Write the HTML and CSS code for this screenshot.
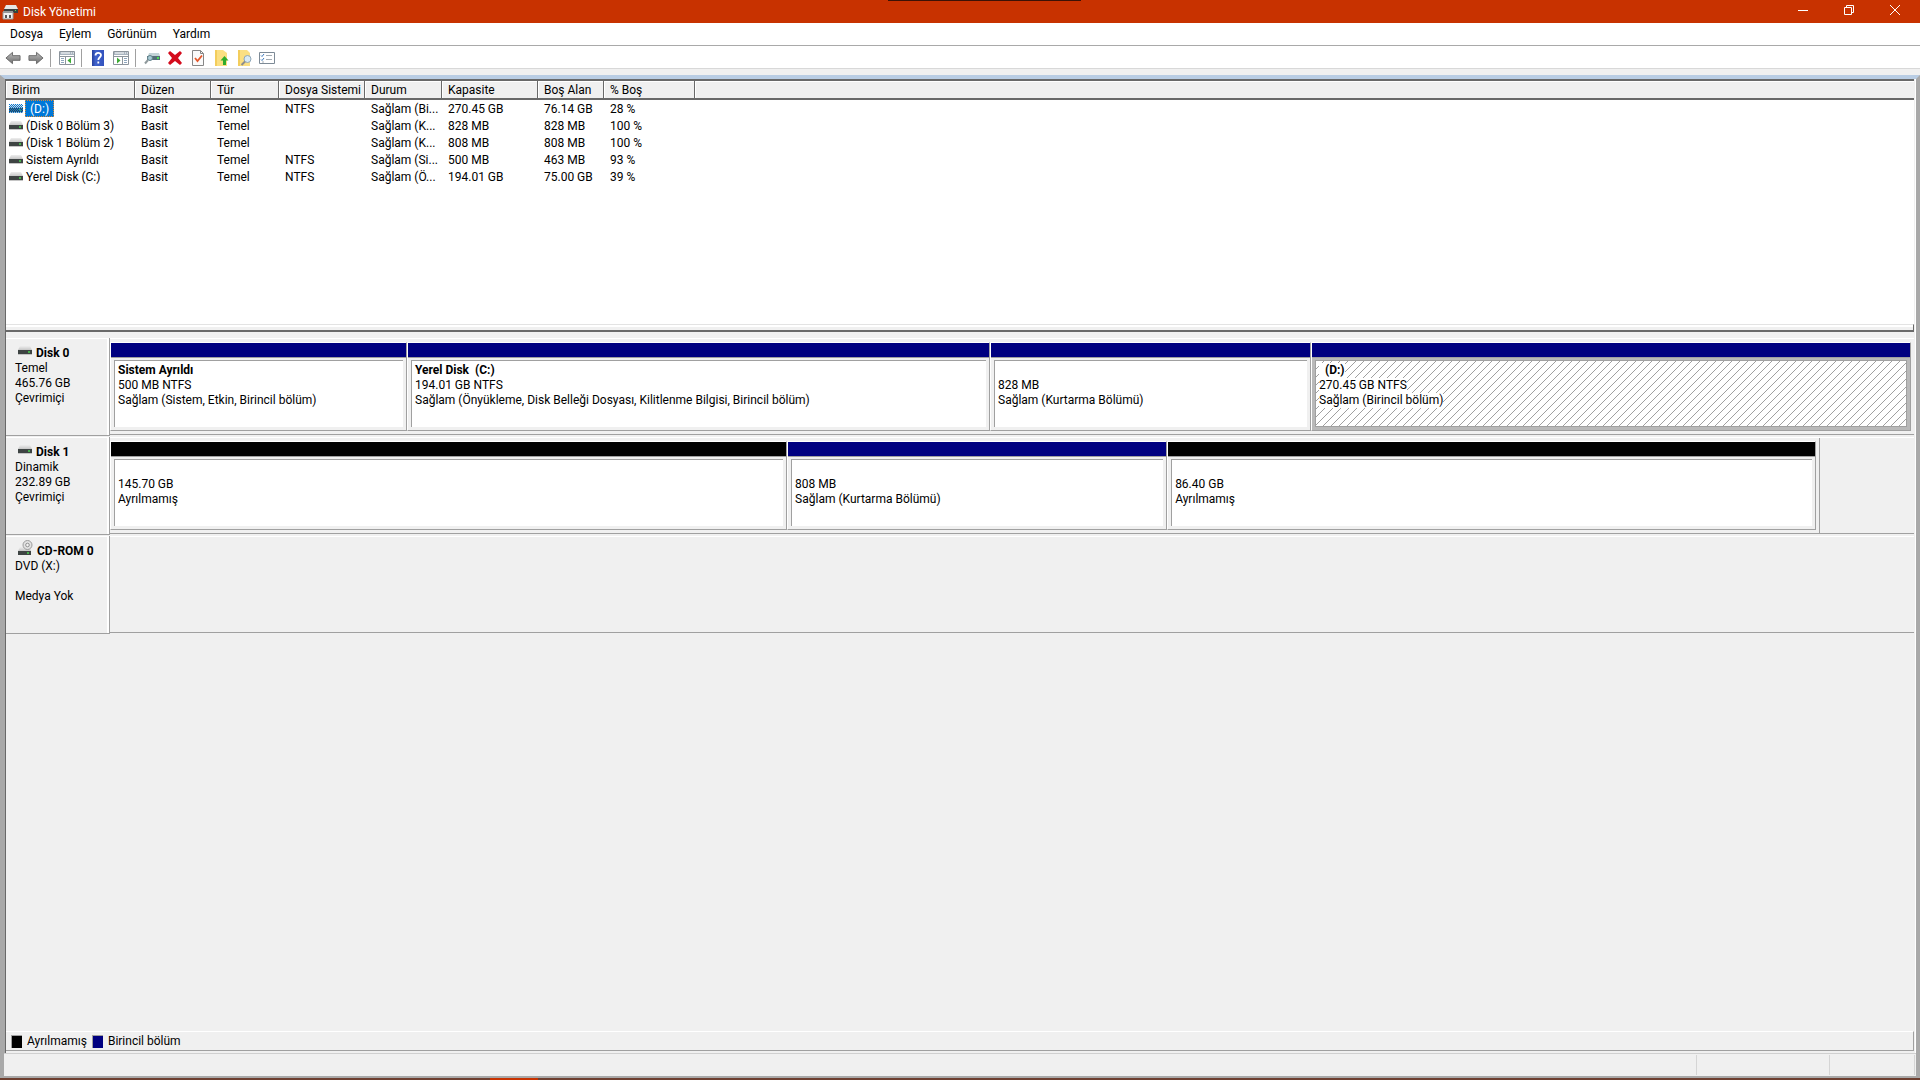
FILE: index.html
```html
<!DOCTYPE html>
<html lang="tr">
<head>
<meta charset="utf-8">
<title>Disk Yönetimi</title>
<link rel="stylesheet" href="styles.css">
</head>
<body>
<svg class="defs" aria-hidden="true">
  <defs>
    <linearGradient id="lid" x1="0" y1="0" x2="0" y2="1"><stop offset="0" stop-color="#eeeeee"/><stop offset="1" stop-color="#c6c6c6"/></linearGradient>
    <linearGradient id="arrow" x1="0" y1="0" x2="0" y2="1"><stop offset="0" stop-color="#bdbdbd"/><stop offset="1" stop-color="#6f6f6f"/></linearGradient>
    <linearGradient id="book" x1="0" y1="0" x2="1" y2="0"><stop offset="0" stop-color="#27409c"/><stop offset=".3" stop-color="#3f62cc"/><stop offset="1" stop-color="#3252bd"/></linearGradient>
    <pattern id="dots" width="2" height="2" patternUnits="userSpaceOnUse"><path d="M0 0h1v1H0zM1 1h1v1H1z" fill="#0078d7"/></pattern>
    <symbol id="drive" viewBox="0 0 14 9"><path d="M2 0h10l2 4H0z" fill="url(#lid)"/><path d="M0 4h14v4H0z" fill="#3e4443"/><path d="M0 8h14v1H0z" fill="#c5c5c5"/><path d="M10 5h2v2h-2z" fill="#46b04c"/></symbol>
    <symbol id="cdrom" viewBox="0 0 15 16"><path d="M2 7h10l1 4H0z" fill="url(#lid)"/><circle cx="9.500" cy="5" r="4.500" fill="#e2e2e2" stroke="#9c9c9c"/><circle cx="9.500" cy="5" r="1.800" fill="#f4f4f4" stroke="#909090"/><path d="M0 11h13v4H0z" fill="#3e4443"/><path d="M9 12h2v2H9z" fill="#46b04c"/></symbol>
    <symbol id="left" viewBox="0 0 17 14"><path d="M1 7l7-6v3.500h8v5H8V13z" fill="url(#arrow)" stroke="#6a6a6a"/></symbol>
    <symbol id="panel" viewBox="0 0 16 15"><path d="M.5.5h15v13H.5z" fill="#fff" stroke="#8c949c"/><path d="M1 1h14v3H1z" fill="#a9b4bf"/><path d="M2 2h9M12 2h1M14 2h1" stroke="#fff"/><path d="M1 5.500h14" stroke="#8c949c"/></symbol>
  </defs>
</svg>
<div class="window">
  <header class="titlebar">
    <svg class="app-icon" viewBox="0 0 16 16"><path d="M4 1h10l2 4H2z" fill="#e6e6e6"/><path d="M2 5h14v4H2z" fill="#3b4040"/><path d="M13 6h1v1h-1z" fill="#4be052"/><path d="M1 8h10v7H1z" fill="#f0f0f0" stroke="#9a9a9a"/><path d="M1 7h10v2H1z" fill="#999"/><path d="M3 11h2v3H3zM7 11h2v3H7z" fill="#555"/></svg>
    <h1 class="title">Disk Yönetimi</h1>
    <div class="window-buttons">
      <button class="winbtn" aria-label="Simge durumuna küçült"><svg viewBox="0 0 12 12"><path d="M1 6.500h10" class="glyph"/></svg></button>
      <button class="winbtn" aria-label="Aşağı geri getir"><svg viewBox="0 0 12 12"><path d="M1.500 3.500h7v7h-7zM3.500 3.500v-2h7v7h-2" class="glyph"/></svg></button>
      <button class="winbtn" aria-label="Kapat"><svg viewBox="0 0 12 12"><path d="M1 1l10 10M11 1L1 11" class="glyph"/></svg></button>
    </div>
    <div class="top-edge"></div>
  </header>
  <nav class="menubar">
    <button>Dosya</button><button>Eylem</button><button>Görünüm</button><button>Yardım</button>
  </nav>
  <div class="toolbar">
    <button aria-label="Geri"><svg viewBox="0 0 17 16"><use href="#left" width="17" height="16"/></svg></button>
    <button aria-label="İleri"><svg viewBox="0 0 17 16"><use href="#left" width="17" height="16" transform="matrix(-1 0 0 1 17 0)"/></svg></button>
    <span class="sep"></span>
    <button aria-label="Konsol ağacı"><svg viewBox="0 0 16 16"><g transform="translate(0 1)"><use href="#panel" width="16" height="15"/><path d="M6.500 5v9" stroke="#8c949c"/><path d="M2 7.500h3M2 9.500h3M2 11.500h3" stroke="#8fa6bd"/><path d="M12 6.500v6L8.500 9.500z" fill="#3dab35"/></g></svg></button>
    <span class="sep"></span>
    <button aria-label="Yardım"><svg viewBox="0 0 16 16"><path d="M2 0h12v16H2z" fill="url(#book)"/><path d="M5.500 5.500c0-3.500 5.500-3.300 5.500-.4 0 2.200-2.700 2.200-2.700 5M8.300 11.500v2" fill="none" stroke="#fff" stroke-width="1.800"/></svg></button>
    <button aria-label="Eylem bölmesi"><svg viewBox="0 0 16 16"><g transform="translate(0 1)"><use href="#panel" width="16" height="15"/><path d="M9.500 5v9" stroke="#8c949c"/><path d="M11 7.500h3M11 9.500h3M11 11.500h3" stroke="#8fa6bd"/><path d="M4 6.500v6l3.500-3z" fill="#3dab35"/></g></svg></button>
    <span class="sep"></span>
    <button aria-label="Yenile"><svg viewBox="0 0 16 16"><path d="M5 3h10l1 3H4z" fill="#c4d4d8"/><path d="M3 6h13v4H3z" fill="#557078"/><path d="M13 7h2v2h-2z" fill="#4be052"/><circle cx="6" cy="8" r="2.500" fill="#a9cbd5" stroke="#63828c"/><path d="M4 10l-3 3.500" stroke="#8f999c" stroke-width="2"/></svg></button>
    <button aria-label="Sil"><svg viewBox="0 0 16 16"><path d="M1 3l2-2 5 4 5-4 2 2-4 5 4 5-2 2-5-4-5 4-2-2 4-5z" fill="#d40b1c"/></svg></button>
    <button aria-label="Özellikler"><svg viewBox="0 0 16 16"><path d="M2.500.5h8l3 3v12h-11z" fill="#fafafa" stroke="#868686"/><path d="M10.500.5v3h3" fill="none" stroke="#868686"/><path d="M5 8l2.500 3L12 5.500" fill="none" stroke="#e4572b" stroke-width="1.800"/></svg></button>
    <button aria-label="Yukarı"><svg viewBox="0 0 16 16"><path d="M2 0h8l4 3v13H2z" fill="#fbdf82"/><path d="M2 0h2v16H2z" fill="#f3cd5c"/><path d="M11.500 6l4 4.500H13V15h-3v-4.500H7.500z" fill="#2fac2b"/></svg></button>
    <button aria-label="Bul"><svg viewBox="0 0 16 16"><path d="M2 0h9l3 3v13H2z" fill="#fbdf82"/><path d="M2 0h2v16H2z" fill="#f3cd5c"/><circle cx="11.500" cy="9" r="3.500" fill="#d9eaf5" stroke="#8fa7b8"/><path d="M9 11.500L5.500 15" stroke="#8d8d8d" stroke-width="2"/></svg></button>
    <button aria-label="Görünüm ayarları"><svg viewBox="0 0 16 16"><path d="M.5 2.500h15v11H.5z" fill="#fff" stroke="#7d8a96"/><path d="M2 5.500l1 1 2-2.500M2 9.500l1 1L5 8" fill="none" stroke="#3c78bd"/><path d="M7 5.500h6M7 9.500h6M3 12h2" stroke="#a4acb3"/></svg></button>
  </div>
  <main class="workspace">
    <section class="volumes">
      <table>
        <colgroup><col class="c-name"><col class="c-layout"><col class="c-type"><col class="c-fs"><col class="c-status"><col class="c-cap"><col class="c-free"><col class="c-pct"><col></colgroup>
        <thead><tr><th>Birim</th><th>Düzen</th><th>Tür</th><th>Dosya Sistemi</th><th>Durum</th><th>Kapasite</th><th>Boş Alan</th><th>% Boş</th><th></th></tr></thead>
        <tbody>
          <tr><td><span class="vol selected"><svg viewBox="0 0 14 9"><use href="#drive" width="14" height="9"/><path d="M0 0h14v9H0z" fill="url(#dots)"/></svg><span class="vol-name">(D:)</span></span></td><td>Basit</td><td>Temel</td><td>NTFS</td><td>Sağlam (Bi...</td><td>270.45 GB</td><td>76.14 GB</td><td>28 %</td><td></td></tr>
          <tr><td><span class="vol"><svg viewBox="0 0 14 9"><use href="#drive" width="14" height="9"/></svg><span class="vol-name">(Disk 0 Bölüm 3)</span></span></td><td>Basit</td><td>Temel</td><td></td><td>Sağlam (K...</td><td>828 MB</td><td>828 MB</td><td>100 %</td><td></td></tr>
          <tr><td><span class="vol"><svg viewBox="0 0 14 9"><use href="#drive" width="14" height="9"/></svg><span class="vol-name">(Disk 1 Bölüm 2)</span></span></td><td>Basit</td><td>Temel</td><td></td><td>Sağlam (K...</td><td>808 MB</td><td>808 MB</td><td>100 %</td><td></td></tr>
          <tr><td><span class="vol"><svg viewBox="0 0 14 9"><use href="#drive" width="14" height="9"/></svg><span class="vol-name">Sistem Ayrıldı</span></span></td><td>Basit</td><td>Temel</td><td>NTFS</td><td>Sağlam (Si...</td><td>500 MB</td><td>463 MB</td><td>93 %</td><td></td></tr>
          <tr><td><span class="vol"><svg viewBox="0 0 14 9"><use href="#drive" width="14" height="9"/></svg><span class="vol-name">Yerel Disk (C:)</span></span></td><td>Basit</td><td>Temel</td><td>NTFS</td><td>Sağlam (Ö...</td><td>194.01 GB</td><td>75.00 GB</td><td>39 %</td><td></td></tr>
        </tbody>
      </table>
    </section>
    <div class="splitter"></div>
    <section class="disks">
      <article class="disk">
        <div class="disk-label">
          <h2><svg class="drive" viewBox="0 0 14 9"><use href="#drive" width="14" height="9"/></svg>Disk 0</h2>
          <p>Temel</p><p>465.76 GB</p><p>Çevrimiçi</p>
        </div>
        <div class="track"><div class="parts full">
          <div class="part primary" style="flex-grow:295"><div class="body"><h3>Sistem Ayrıldı</h3><p>500 MB NTFS</p><p>Sağlam (Sistem, Etkin, Birincil bölüm)</p></div></div>
          <div class="part primary" style="flex-grow:581"><div class="body"><h3>Yerel Disk&nbsp; (C:)</h3><p>194.01 GB NTFS</p><p>Sağlam (Önyükleme, Disk Belleği Dosyası, Kilitlenme Bilgisi, Birincil bölüm)</p></div></div>
          <div class="part primary" style="flex-grow:319"><div class="body"><h3></h3><p>828 MB</p><p>Sağlam (Kurtarma Bölümü)</p></div></div>
          <div class="part primary active" style="flex-grow:598"><div class="body"><h3>&nbsp; (D:)</h3><p>270.45 GB NTFS</p><p>Sağlam (Birincil bölüm)</p></div></div>
        </div></div>
      </article>
      <article class="disk">
        <div class="disk-label">
          <h2><svg class="drive" viewBox="0 0 14 9"><use href="#drive" width="14" height="9"/></svg>Disk 1</h2>
          <p>Dinamik</p><p>232.89 GB</p><p>Çevrimiçi</p>
        </div>
        <div class="track"><div class="parts" style="width:94.800%">
          <div class="part" style="flex-grow:675"><div class="body"><h3></h3><p>145.70 GB</p><p>Ayrılmamış</p></div></div>
          <div class="part primary" style="flex-grow:378"><div class="body"><h3></h3><p>808 MB</p><p>Sağlam (Kurtarma Bölümü)</p></div></div>
          <div class="part" style="flex-grow:647"><div class="body"><h3></h3><p>86.40 GB</p><p>Ayrılmamış</p></div></div>
        </div></div>
      </article>
      <article class="disk">
        <div class="disk-label">
          <h2><svg class="cdrom" viewBox="0 0 15 16"><use href="#cdrom" width="15" height="16"/></svg>CD-ROM 0</h2>
          <p>DVD (X:)</p><p></p><p>Medya Yok</p>
        </div>
        <div class="track empty"></div>
      </article>
    </section>
    <footer class="legend"><span class="key"></span><span>Ayrılmamış</span><span class="key primary-key"></span><span>Birincil bölüm</span></footer>
  </main>
  <div class="statusbar"><span></span><span></span><span></span></div>
  <div class="taskbar-edge"><span></span></div>
</div>
</body>
</html>
```
FILE: styles.css
```css
* { box-sizing: border-box; margin: 0; padding: 0; }
body { font: 12px/15px Roboto, "Open Sans", sans-serif; color: #000; background: #f0f0f0; }
button { font: inherit; color: inherit; background: none; border: 0; }
svg { display: block; }
.defs { position: absolute; width: 0; height: 0; }
.window { display: flex; flex-direction: column; min-height: 100vh; background: #f0f0f0; }

.titlebar { position: relative; display: flex; align-items: center; height: 23px; padding: 0 2px; background: #c83200; color: #fff; }
.app-icon { width: 16px; height: 16px; }
.title { flex: 1; margin-left: 5px; padding-top: 2px; font-size: 12px; font-weight: 400; }
.window-buttons { display: flex; height: 100%; }
.winbtn { width: 46px; display: flex; align-items: center; justify-content: center; padding-bottom: 3px; }
.winbtn svg { width: 12px; height: 12px; }
.glyph { fill: none; stroke: #fff; }
.top-edge { position: absolute; top: 0; left: 888px; width: 193px; height: 1px; background: #3c1206; }

.menubar { display: flex; height: 23px; padding: 0 2px; background: #fff; border-bottom: 1px solid #a9a9a9; }
.menubar button { padding: 0 8px; }
.toolbar { display: flex; align-items: center; height: 23px; padding: 1px 0 0 1px; background: #fff; border-bottom: 1px solid #d8d8d8; }
.toolbar button { width: 23px; height: 20px; display: flex; align-items: center; justify-content: center; }
.toolbar svg { width: 16px; height: 16px; }
.sep { width: 1px; height: 18px; margin: 0 4px 0 3px; background: #a0a0a0; }

.workspace { flex: 1; display: flex; flex-direction: column; margin-top: 6px; border: solid #a9a9a9; border-width: 0 4px 0 5px; border-top: 4px solid #b9cde4; box-shadow: inset 1px 0 #696969, inset -1px 0 #fff; padding: 0 2px 0 1px; }
.volumes { height: 245px; background: #fff; border-top: 2px solid #696969; overflow: hidden; }
table { width: 100%; table-layout: fixed; border-collapse: separate; border-spacing: 0; }
th, td { text-align: left; font-weight: 400; white-space: nowrap; overflow: hidden; padding-left: 6px; }
th { height: 19px; padding-top: 2px; background: #f0f0f0; border: solid #696969; border-width: 0 1px 2px 0; box-shadow: inset 1px 1px #fff; }
th:last-child { border-right: 0; }
td { height: 17px; padding-top: 2px; }
td:first-child { padding-left: 3px; padding-top: 0; }
.c-name { width: 129px; } .c-layout { width: 76px; } .c-type { width: 68px; } .c-fs { width: 86px; }
.c-status { width: 77px; } .c-cap { width: 96px; } .c-free { width: 66px; } .c-pct { width: 91px; }
.vol { display: flex; align-items: center; gap: 2px; }
.vol svg { width: 14px; height: 9px; }
.vol-name { padding: 2px 1px 0; height: 17px; line-height: 15px; }
.selected .vol-name { padding: 2px 5px 0; background: #0078d7; color: #fff; outline: 1px dotted #d98a3a; outline-offset: -1px; }

.splitter { height: 8px; border: solid #696969; border-width: 0 1px 2px 0; border-top: 1px solid #e3e3e3; background: #f0f0f0; box-shadow: inset 0 2px #fff; }
.disks { flex: 1; padding-top: 6px; }
.disk { display: flex; height: 99px; }
.disk-label { width: 104px; height: 98px; padding: 8px 0 0 9px; border: solid #a0a0a0; border-width: 0 1px 1px 0; box-shadow: inset -2px 1px #fff; }
h2, h3 { font-size: 12px; line-height: 15px; font-weight: 700; }
h2 { display: flex; gap: 4px; }
p, h3 { min-height: 15px; white-space: pre; }
.drive { width: 14px; height: 9px; margin-left: 3px; }
.cdrom { width: 15px; height: 16px; margin: -4px 0 0 3px; }
.track { flex: 1; height: 97px; border-top: 1px solid #fff; border-bottom: 1px solid #a0a0a0; }
.parts { display: flex; height: 95px; padding: 3px 3px 3px 0; border-right: 1px solid #a0a0a0; }
.parts.full { border-right: 0; }
.part { flex: 1 1 0; min-width: 0; display: flex; flex-direction: column; border: 1px solid; border-color: #fff #a0a0a0 #a0a0a0 #fff; }
.part::before { content: ""; height: 14px; background: #000; border-bottom: 1px solid #a0a0a0; }
.part.primary::before { background: #000080; }
.body { flex: 1; margin: 2px 3px 3px; padding: 2px 0 0 3px; overflow: hidden; background: #fff; border: solid #a0a0a0; border-width: 1px 0 0 1px; }
.active { background: #b9b9b9; }
.active .body { border-width: 1px; background: #fff url("data:image/svg+xml,%3Csvg xmlns='http://www.w3.org/2000/svg' width='8' height='8'%3E%3Cpath d='M7 0h1v1h-1zM6 1h1v1h-1zM5 2h1v1h-1zM4 3h1v1h-1zM3 4h1v1h-1zM2 5h1v1h-1zM1 6h1v1h-1zM0 7h1v1h-1z' fill='%23a0a0a0'/%3E%3C/svg%3E"); }
.active p, .active h3 { width: max-content; background: #fff; }

.legend { display: flex; align-items: center; height: 20px; padding-left: 5px; border: solid #a0a0a0; border-width: 0 1px 1px 0; border-top: 1px solid #fff; margin-bottom: 2px; }
.key { width: 11px; height: 13px; margin-right: 5px; background: #000; border: 1px solid #a0a0a0; border-width: 1px 0 0 1px; }
.primary-key { margin-left: 5px; background: #000080; }
.statusbar { display: flex; height: 25px; border: solid #a9a9a9; border-width: 0 4px 2px; box-shadow: inset 0 1px #d0d0d0; padding: 2px 1px 1px 0; }
.statusbar span { width: 85px; border-right: 1px solid #d5d5d5; }
.statusbar span:first-child { flex: 1; }
.statusbar span:nth-child(2) { width: 133px; }
.taskbar-edge { height: 2px; background: #6e3f30; }
.taskbar-edge span { display: block; width: 48px; height: 2px; margin-left: 490px; background: #c83200; }
```
